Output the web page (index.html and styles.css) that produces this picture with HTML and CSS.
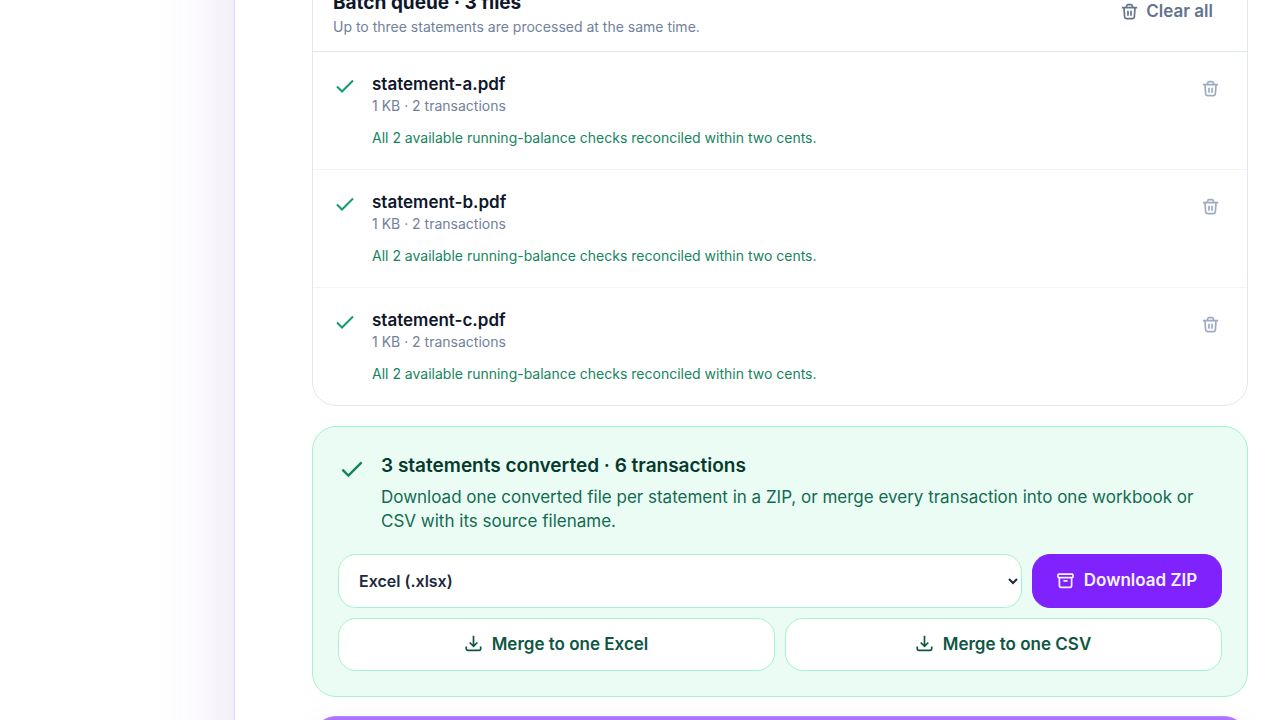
FILE: index.html
```html
<!DOCTYPE html>
<html lang="en">
<head>
<meta charset="utf-8">
<meta name="viewport" content="width=device-width, initial-scale=1">
<title>Batch queue</title>
<link rel="stylesheet" href="styles.css">
</head>
<body>
<svg class="sprite" aria-hidden="true">
  <symbol id="trash" viewBox="0 0 20 20"><path d="M1 5.500h18M6 5.500l.8-2.600A1.500 1.500 0 0 1 8.200 1.800h3.600a1.500 1.500 0 0 1 1.400 1.100l.8 2.600M3.500 5.500l.8 11a2 2 0 0 0 2 1.800h7.400a2 2 0 0 0 2-1.800l.8-11M8.200 9v6M11.800 9v6"/></symbol>
  <symbol id="check" viewBox="0 0 20 20"><path d="M2 10.500l5 5L18 4.500"/></symbol>
  <symbol id="download" viewBox="0 0 20 20"><path d="M10 1v12M5.500 8.800l4.500 4.500L14.500 8.800M1.500 13.500v2.500a2 2 0 0 0 2 2h13a2 2 0 0 0 2-2v-2.500"/></symbol>
  <symbol id="archive" viewBox="0 0 20 20"><path d="M2.200 2.500h15.600a1 1 0 0 1 1 1v2a1 1 0 0 1-1 1h-15.600a1 1 0 0 1-1-1v-2a1 1 0 0 1 1-1zM2.800 6.500v9.500a2 2 0 0 0 2 2h10.400a2 2 0 0 0 2-2V6.500M7.500 10.500h5"/></symbol>
</svg>
<main class="panel">
  <section class="queue">
    <header class="queue-head">
      <div>
        <h2 class="queue-title">Batch queue · 3 files</h2>
        <p class="queue-sub">Up to three statements are processed at the same time.</p>
      </div>
      <button class="clear" type="button"><svg class="icon"><use href="#trash"/></svg>Clear all</button>
    </header>
    <ul class="files">
      <li class="file">
        <svg class="file-check"><use href="#check"/></svg>
        <div class="file-body">
          <h3 class="file-name">statement-a.pdf</h3>
          <p class="file-meta">1 KB · 2 transactions</p>
          <p class="file-note">All 2 available running-balance checks reconciled within two cents.</p>
        </div>
        <button class="remove" type="button" aria-label="Remove statement-a.pdf"><svg class="icon"><use href="#trash"/></svg></button>
      </li>
      <li class="file">
        <svg class="file-check"><use href="#check"/></svg>
        <div class="file-body">
          <h3 class="file-name">statement-b.pdf</h3>
          <p class="file-meta">1 KB · 2 transactions</p>
          <p class="file-note">All 2 available running-balance checks reconciled within two cents.</p>
        </div>
        <button class="remove" type="button" aria-label="Remove statement-b.pdf"><svg class="icon"><use href="#trash"/></svg></button>
      </li>
      <li class="file">
        <svg class="file-check"><use href="#check"/></svg>
        <div class="file-body">
          <h3 class="file-name">statement-c.pdf</h3>
          <p class="file-meta">1 KB · 2 transactions</p>
          <p class="file-note">All 2 available running-balance checks reconciled within two cents.</p>
        </div>
        <button class="remove" type="button" aria-label="Remove statement-c.pdf"><svg class="icon"><use href="#trash"/></svg></button>
      </li>
    </ul>
  </section>
  <section class="result">
    <div class="summary">
      <svg class="summary-check"><use href="#check"/></svg>
      <div>
        <h2 class="summary-title">3 statements converted · 6 transactions</h2>
        <p class="summary-text">Download one converted file per statement in a ZIP, or merge every transaction into one workbook or CSV with its source filename.</p>
      </div>
    </div>
    <div class="export">
      <select class="format" aria-label="Export format">
        <option>Excel (.xlsx)</option>
        <option>CSV (.csv)</option>
      </select>
      <button class="btn btn-primary" type="button"><svg class="icon"><use href="#archive"/></svg>Download ZIP</button>
    </div>
    <div class="merge">
      <button class="btn btn-light" type="button"><svg class="icon"><use href="#download"/></svg>Merge to one Excel</button>
      <button class="btn btn-light" type="button"><svg class="icon"><use href="#download"/></svg>Merge to one CSV</button>
    </div>
  </section>
  <section class="promo"></section>
</main>
</body>
</html>
```
FILE: styles.css
```css
* { box-sizing: border-box; }
body {
  margin: 0;
  height: 100vh;
  overflow: hidden;
  background: #fff;
  color: #0f172b;
  font-family: Inter, "Liberation Sans", sans-serif;
}
h2, h3, p, ul { margin: 0; padding: 0; }
button, select { font: inherit; cursor: pointer; }
.sprite { display: none; }
svg { fill: none; stroke: currentColor; stroke-width: 2; flex: none; }
.icon { width: 17px; height: 17px; }

.panel {
  display: flow-root;
  margin: -200px 0 0 234px;
  padding: 174px 32px 100px 77px;
  background: #fff;
  border-left: 1px solid #ddd6ff;
  box-shadow: 0 0 76px rgba(76, 29, 149, 0.14);
}

.queue {
  border: 1px solid #e2e8f0;
  border-radius: 24px;
}
.queue-head {
  display: flex;
  align-items: center;
  justify-content: space-between;
  padding: 14px 20px;
  border-bottom: 1px solid #e2e8f0;
}
.queue-title { font-size: 19px; line-height: 28px; font-weight: 700; }
.queue-sub { font-size: 14px; line-height: 20px; color: #71829b; }
.clear {
  display: flex;
  align-items: center;
  gap: 8px;
  padding: 0 14px 4px;
  border: 0;
  background: none;
  color: #62748e;
  font-size: 17px;
  line-height: 24px;
  font-weight: 600;
}

.files { list-style: none; }
.file { display: flex; padding: 20px 20px 21px; border-top: 1px solid #f1f5f9; }
.file:first-child { border-top: 0; }
.file-check { width: 20px; height: 20px; margin: 4px 17px 0 2px; color: #109c6d; }
.file-body { flex: 1; }
.file-name { font-size: 17px; line-height: 24px; font-weight: 600; }
.file-meta { font-size: 14px; line-height: 20px; color: #71829b; }
.file-note { margin-top: 12px; font-size: 14px; line-height: 20px; color: #158560; }
.remove {
  display: flex;
  align-self: flex-start;
  padding: 8px;
  border: 0;
  background: none;
  color: #9dacc1;
}

.result {
  margin-top: 20px;
  padding: 25px;
  border: 1px solid #a4f4cf;
  border-radius: 24px;
  background: #ebfcf5;
}
.summary { display: flex; }
.summary-check { width: 24px; height: 24px; margin: 5px 17px 0 2px; color: #108360; }
.summary-title { font-size: 19px; line-height: 28px; font-weight: 600; color: #063a2d; }
.summary-text { margin-top: 5px; font-size: 17px; line-height: 24px; color: #126b51; }
.export { display: grid; grid-template-columns: 1fr 190px; gap: 10px; margin-top: 21px; }
.merge { display: grid; grid-template-columns: 1fr 1fr; gap: 10px; margin-top: 10px; }
.format {
  min-width: 0;
  height: 54px;
  padding: 0 0 0 16px;
  border: 1px solid #a4f4cf;
  border-radius: 18px;
  background: #fff;
  color: #1d293d;
  font-size: 16px;
  font-weight: 600;
}
.btn {
  display: flex;
  align-items: center;
  justify-content: center;
  gap: 10px;
  min-height: 53px;
  padding: 0 16px 2px;
  border: 1px solid #a4f4cf;
  border-radius: 18px;
  font-size: 17px;
  font-weight: 600;
}
.btn-light { background: #fff; color: #0f5643; }
.btn-primary { border-color: #7f22fe; background: #7f22fe; color: #f5f3ff; }

.promo {
  margin-top: 19px;
  min-height: 160px;
  border: 1px solid #b98aff;
  border-radius: 24px;
  background: #ab73ff;
  box-shadow: 0 10px 30px rgba(127, 34, 254, 0.1);
}
```
